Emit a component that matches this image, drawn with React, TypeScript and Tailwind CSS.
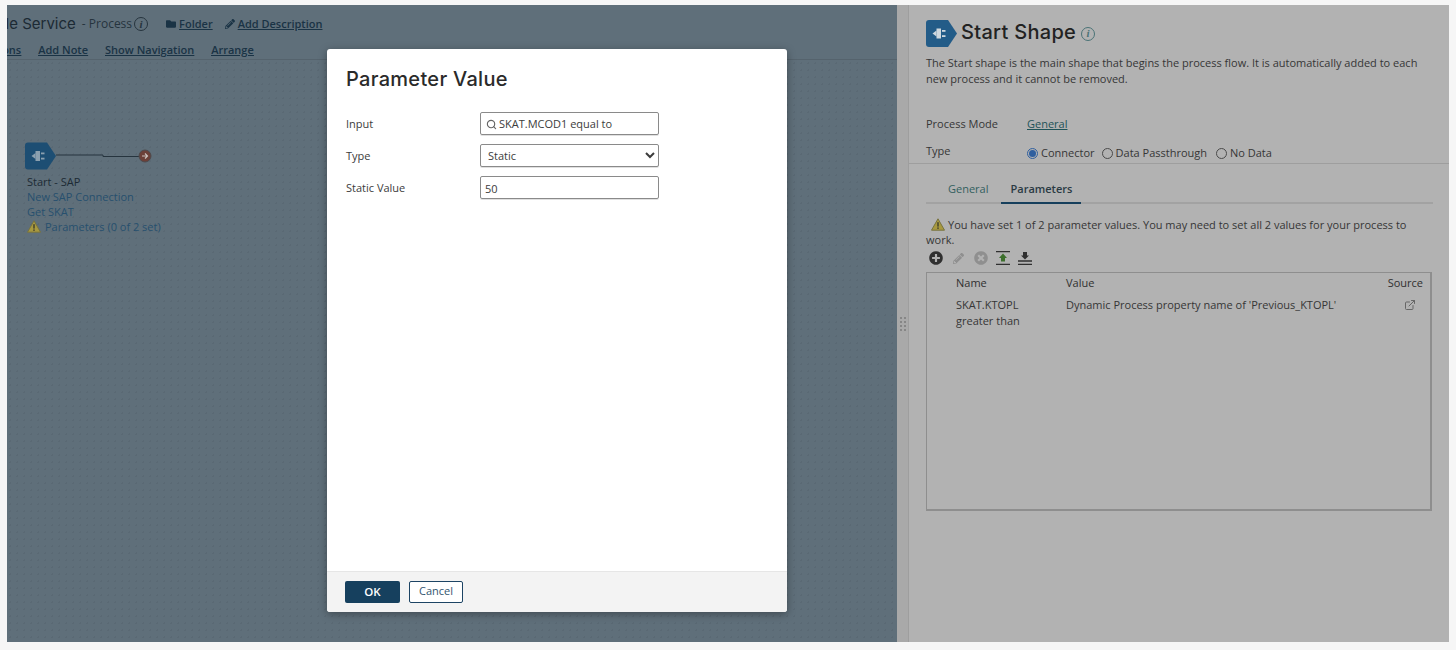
import React from "react";
import { ExternalLink, Search } from "lucide-react";
import { FaFolder, FaPencilAlt, FaPlusCircle, FaTimesCircle } from "react-icons/fa";

const HEADING = "font-['Inter',sans-serif]";

function PlugShape({ className, plug }: { className?: string; plug: string }) {
  return (
    <svg viewBox="0 0 31 27" className={className}>
      <path d="M3 0H22L31 13.5L22 27H3Q0 27 0 24V3Q0 0 3 0Z" fill="currentColor" />
      <path d="M6.5 13.5L10.5 10.5V16.5Z" fill={plug} />
      <rect x="10.5" y="8.5" width="4.5" height="10" fill={plug} />
      <rect x="16" y="10" width="3.5" height="1.8" fill={plug} />
      <rect x="16" y="15.2" width="3.5" height="1.8" fill={plug} />
    </svg>
  );
}

function Warning({ className }: { className?: string }) {
  return (
    <svg viewBox="0 0 14 13" className={className}>
      <path d="M7 .8L13.5 12.2H.5Z" fill="#a8993f" stroke="#77733f" strokeWidth="1" strokeLinejoin="round" />
      <rect x="6.3" y="4.2" width="1.4" height="4.4" fill="#3d3c2c" />
      <rect x="6.3" y="9.4" width="1.4" height="1.5" fill="#3d3c2c" />
    </svg>
  );
}

function InfoMark({ color }: { color: string }) {
  return (
    <span className={`flex h-[14px] w-[14px] items-center justify-center rounded-full border text-[11px] italic leading-none font-['Liberation_Serif',serif] font-bold ${color}`}>
      i
    </span>
  );
}

function Radio({ label, checked }: { label: string; checked?: boolean }) {
  return (
    <span className="flex items-center gap-[3px]">
      <span className={`flex h-[11px] w-[11px] items-center justify-center rounded-full border ${checked ? "border-[#2f5f9f]" : "border-[#4a4a4a]"}`}>
        {checked && <span className="h-[7px] w-[7px] rounded-full bg-[#2f5f9f]" />}
      </span>
      {label}
    </span>
  );
}

function Canvas() {
  return (
    <div className="relative flex w-[890px] shrink-0 flex-col overflow-hidden bg-[#5f6f7a] text-[#1e2d38]">
      <div className="flex h-[38px] items-center whitespace-nowrap">
        <span className={`-ml-[37px] text-[15px] text-[#1c2a34] ${HEADING}`}>Simple Service</span>
        <span className="ml-[6px] text-[12px] text-[#26343e]">- Process</span>
        <span className="ml-[2px]"><InfoMark color="border-[#26343e] text-[#26343e]" /></span>
        <FaFolder className="ml-[17px] h-[10px] w-[12px] text-[#1a3345]" />
        <a className="ml-[2px] text-[11px] font-semibold text-[#1a3345] underline">Folder</a>
        <FaPencilAlt className="ml-[12px] h-[10px] w-[10px] text-[#1a3345]" />
        <a className="ml-[3px] text-[11px] font-semibold text-[#1a3345] underline">Add Description</a>
      </div>
      <div className="flex h-[17px] items-center gap-[17px] whitespace-nowrap border-b border-[#55636d] pb-[2px] text-[11px] font-semibold text-[#1a3345] underline">
        <a className="-ml-[25px]">Actions</a>
        <a>Add Note</a>
        <a>Show Navigation</a>
        <a>Arrange</a>
      </div>
      <div className="flex-1 bg-[radial-gradient(#5a6974_1px,transparent_1px)] bg-[size:7px_7px]" />

      <div className="absolute left-[18px] top-[137px]">
        <div className="flex items-center">
          <PlugShape className="h-[28px] w-[31px] text-[#1d4e73]" plug="#8ba0af" />
          <svg width="96" height="28" viewBox="0 0 96 28">
            <path d="M0 13H47V14.5H90" fill="none" stroke="#26343e" strokeWidth="1" />
            <circle cx="89" cy="14" r="6" fill="#6c4038" stroke="#4d4a4d" />
            <path d="M86 14H91M89 11.5L91.5 14L89 16.5" stroke="#c9c0bc" strokeWidth="1.2" fill="none" />
          </svg>
        </div>
        <div className="ml-[2px] mt-[4px] text-[11px] leading-[15px] whitespace-nowrap text-[#27506e]">
          <div className="text-[#1c2a34]">Start - SAP</div>
          <div>New SAP Connection</div>
          <div>Get SKAT</div>
          <div className="flex items-center gap-[4px]"><Warning className="h-[13px] w-[14px]" />Parameters (0 of 2 set)</div>
        </div>
      </div>

      <div className="absolute left-[320px] top-[44px] flex h-[563px] w-[460px] flex-col overflow-hidden rounded-[3px] bg-white text-[#3c3c3c] shadow-[0_2px_8px_rgba(0,0,0,0.35)]">
        <div className="flex-1 pl-[19px] pr-[128px]">
          <h2 className={`mt-[17px] mb-[20px] text-[20px] leading-[26px] font-medium tracking-[0.3px] text-[#2a2a2a] ${HEADING}`}>Parameter Value</h2>
          <div className="grid grid-cols-[134px_179px] items-center gap-y-[9px] text-[11px]">
            <label className="pt-[1px]">Input</label>
            <div className="flex h-[23px] items-center gap-[2px] rounded-[2px] border border-[#8a8a8a] pl-[5px] pt-[1px] shadow-[0_1px_0_rgba(0,0,0,0.12)]">
              <Search className="h-[11px] w-[11px] text-[#666]" strokeWidth={2.5} />
              SKAT.MCOD1 equal to
            </div>
            <label className="pt-[1px]">Type</label>
            <select defaultValue="Static" className="h-[23px] rounded-[2px] border border-[#8a8a8a] bg-white pl-[3px] text-[11px] shadow-[0_1px_0_rgba(0,0,0,0.12)] outline-none">
              <option>Static</option>
              <option>Dynamic</option>
            </select>
            <label className="pt-[1px]">Static Value</label>
            <input defaultValue="50" className="h-[23px] rounded-[2px] border border-[#8a8a8a] pl-[4px] pt-[1px] shadow-[0_1px_0_rgba(0,0,0,0.12)] outline-none" />
          </div>
        </div>
        <div className="flex h-[41px] items-center gap-[9px] border-t border-[#e6e6e6] bg-[#f3f3f3] pl-[18px] pb-[1px]">
          <button className="h-[22px] w-[55px] rounded-[2px] bg-[#16405e] text-[11.5px] font-semibold text-white">OK</button>
          <button className="h-[22px] w-[54px] rounded-[2px] border border-[#1d4464] bg-white text-[11px] font-medium text-[#33566f]">Cancel</button>
        </div>
      </div>
    </div>
  );
}

function SidePanel() {
  return (
    <div className="flex min-w-0 flex-1 flex-col border-l border-[#9e9e9e] bg-[#b2b2b2] text-[11px] text-[#363636]">
      <div className="border-b border-[#9e9e9e] px-[17px] pt-[16px]">
        <div className="-mt-[1px] flex items-center">
          <PlugShape className="h-[27px] w-[31px] text-[#235c88]" plug="#cfd8de" />
          <h1 className={`ml-[4px] -translate-y-[1px] text-[20px] leading-[27px] font-medium tracking-[0.3px] text-[#222] ${HEADING}`}>Start Shape</h1>
          <span className="ml-[5px]"><InfoMark color="border-[#4a7376] text-[#4a7376]" /></span>
        </div>
        <p className="mt-[8px] h-[48px] w-[500px] leading-[16px]">
          The Start shape is the main shape that begins the process flow. It is automatically added to each new process and it cannot be removed.
        </p>
        <div className="mt-[13px] flex items-center">
          <span className="w-[101px]">Process Mode</span>
          <a className="font-medium text-[#1f5358] underline">General</a>
        </div>
        <div className="mt-[11px] flex h-[16px] items-center">
          <span className="w-[101px]">Type</span>
          <span className="flex translate-y-[2px] gap-[7px]">
            <Radio label="Connector" checked />
            <Radio label="Data Passthrough" />
            <span className="ml-[2px]"><Radio label="No Data" /></span>
          </span>
        </div>
        <div className="h-[3px]" />
      </div>
      <div className="px-[17px] pt-[15px]">
        <div className="mr-[-1px] flex h-[25px] items-end border-b-2 border-[#a2a2a2] font-medium">
          <span className="mb-[4px] ml-[22px] text-[#33605f]">General</span>
          <span className="ml-[13px] -mb-[2px] border-b-2 border-[#163f5c] px-[9px] pb-[4px] font-semibold text-[#2a3a44]">Parameters</span>
        </div>
        <div className="mt-[13px] leading-[15px]">
          <Warning className="ml-[5px] mr-[3px] inline-block h-[13px] w-[14px] align-[-2px]" />
          You have set 1 of 2 parameter values. You may need to set all 2 values for your process to work.
        </div>
        <div className="mt-[3px] flex h-[17px] items-center gap-[8px] pl-[3px]">
          <FaPlusCircle className="h-[14px] w-[14px] text-[#303030]" />
          <FaPencilAlt className="ml-[2px] h-[11px] w-[11px] text-[#8f8f8f]" />
          <FaTimesCircle className="ml-[2px] h-[14px] w-[14px] text-[#8f8f8f]" />
          <svg viewBox="0 0 14 14" className="h-[14px] w-[14px]">
            <path d="M0 .7H14M0 13.3H14" stroke="#303030" strokeWidth="1.3" />
            <path d="M7 2.5L11 7H9V10.5H5V7H3Z" fill="#3c6f2c" />
          </svg>
          <svg viewBox="0 0 14 14" className="h-[14px] w-[14px]">
            <path d="M0 10H14M0 13.3H14" stroke="#303030" strokeWidth="1.3" />
            <path d="M7 8.5L3 4.5H5V1H9V4.5H11Z" fill="#303030" />
          </svg>
        </div>
        <div className="mt-[5px] h-[239px] border border-b-2 border-r-2 border-[#8e8e8e] pr-[7px]">
          <div className="flex h-[21px] items-center font-medium text-[#303030]">
            <span className="ml-[29px] w-[110px]">Name</span>
            <span className="flex-1">Value</span>
            <span>Source</span>
          </div>
          <div className="mt-[3px] flex leading-[16px]">
            <span className="ml-[29px] w-[110px]">SKAT.KTOPL<br />greater than</span>
            <span className="flex-1">Dynamic Process property name of 'Previous_KTOPL'</span>
            <ExternalLink className="mr-[7px] mt-[2px] h-[12px] w-[12px] text-[#666]" />
          </div>
        </div>
      </div>
    </div>
  );
}

export default function App() {
  return (
    <div className="h-[650px] overflow-hidden bg-[#f6f6f6] pt-[5px] pl-[7px] pr-[7px] font-['Open_Sans',sans-serif]">
      <div className="flex h-[637px]">
        <Canvas />
        <div className="flex w-[11px] shrink-0 items-center justify-center bg-[#a9a9a9]">
          <div className="grid grid-cols-2 gap-[2px]">
            {[0, 1, 2, 3, 4, 5, 6, 7].map((i) => (
              <span key={i} className="h-[2px] w-[2px] bg-[#868686]" />
            ))}
          </div>
        </div>
        <SidePanel />
      </div>
    </div>
  );
}
